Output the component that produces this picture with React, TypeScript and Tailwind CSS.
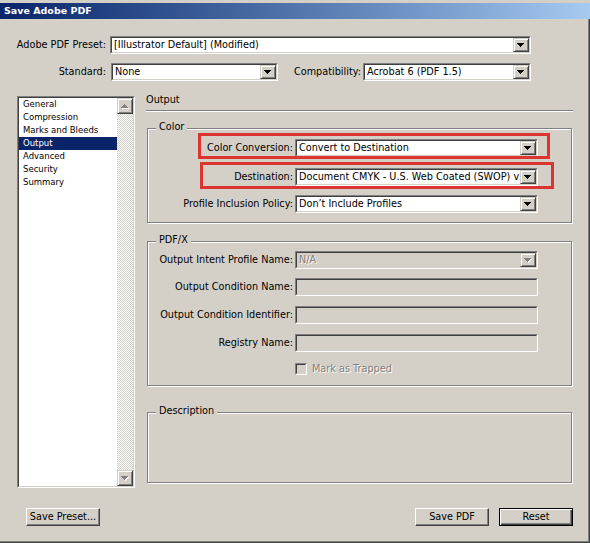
import React from 'react';

// Win2000-style dialog: "Save Adobe PDF" / Output panel

const ArrowDown = ({ disabled = false }: { disabled?: boolean }) => (
  <svg width="8" height="5" viewBox="0 0 8 5" className="block" shapeRendering="crispEdges">
    {disabled && <path d="M1 1h7v1H1zM2 2h5v1H2zM3 3h3v1H3zM4 4h1v1H4z" fill="#ffffff" />}
    <path d="M0 0h7v1H0zM1 1h5v1H1zM2 2h3v1H2zM3 3h1v1H3z" fill={disabled ? '#808080' : '#000000'} />
  </svg>
);

const ArrowUp = ({ disabled = false }: { disabled?: boolean }) => (
  <svg width="8" height="5" viewBox="0 0 8 5" className="block" shapeRendering="crispEdges">
    {disabled && <path d="M4 1h1v1H4zM3 2h3v1H3zM2 3h5v1H2zM1 4h7v1H1z" fill="#ffffff" />}
    <path d="M3 0h1v1H3zM2 1h3v1H2zM1 2h5v1H1zM0 3h7v1H0z" fill={disabled ? '#808080' : '#000000'} />
  </svg>
);

const RaisedButton = ({ children, className = '' }: { children: React.ReactNode; className?: string }) => (
  <div
    className={`flex shrink-0 items-center justify-center bg-[#d4d0c8] border border-t-[#d4d0c8] border-l-[#d4d0c8] border-r-[#404040] border-b-[#404040] shadow-[inset_1px_1px_0_#ffffff,inset_-1px_-1px_0_#808080] ${className}`}
  >
    {children}
  </div>
);

interface FieldProps {
  value?: string;
  className: string;
  disabled?: boolean;
  dropdown?: boolean;
}

const Field: React.FC<FieldProps> = ({ value = '', className, disabled = false, dropdown = true }) => (
  <div className={`flex h-[18px] shrink-0 border border-t-[#808080] border-l-[#808080] border-r-white border-b-white ${className}`}>
    <div
      className={`flex min-w-0 flex-1 border border-t-[#404040] border-l-[#404040] border-r-[#d4d0c8] border-b-[#d4d0c8] ${
        disabled ? 'bg-[#d4d0c8]' : 'bg-white'
      }`}
    >
      <span
        className={`min-w-0 flex-1 overflow-hidden whitespace-nowrap pl-[2px] leading-[14px] ${
          disabled ? 'text-[#808080] [text-shadow:1px_1px_0_#ffffff]' : ''
        }`}
      >
        {value}
      </span>
      {dropdown && (
        <RaisedButton className="w-[16px]">
          <ArrowDown disabled={disabled} />
        </RaisedButton>
      )}
    </div>
  </div>
);

const Group = ({ title, className, children }: { title: string; className: string; children?: React.ReactNode }) => (
  <div className={`relative shrink-0 border border-[#808080] shadow-[inset_1px_1px_0_#ffffff,1px_1px_0_#ffffff] ${className}`}>
    <span className="absolute left-[8px] -top-[8px] bg-[#d4d0c8] px-[3px] leading-[12px]">{title}</span>
    {children}
  </div>
);

const Row = ({ label, children, className = '' }: { label: string; children: React.ReactNode; className?: string }) => (
  <div className={`flex items-center ${className}`}>
    <div className="w-[145px] shrink-0 whitespace-nowrap text-right">{label}</div>
    <div className="ml-[2px]">{children}</div>
  </div>
);

const Button = ({ label, primary = false, className = '' }: { label: string; primary?: boolean; className?: string }) => (
  <div
    className={`flex h-[18px] w-[74px] shrink-0 items-center justify-center whitespace-nowrap bg-[#d4d0c8] leading-[16px] ${
      primary
        ? 'border border-black shadow-[inset_1px_1px_0_#ffffff,inset_-1px_-1px_0_#404040,inset_-2px_-2px_0_#808080]'
        : 'border border-t-white border-l-white border-r-[#404040] border-b-[#404040] shadow-[inset_-1px_-1px_0_#808080]'
    } ${className}`}
  >
    {label}
  </div>
);

const sections = ['General', 'Compression', 'Marks and Bleeds', 'Output', 'Advanced', 'Security', 'Summary'];

export default function App() {
  return (
    <div className="flex h-[543px] w-[590px] flex-col overflow-hidden bg-[#d4d0c8] pt-[3px] font-['DejaVu_Sans',sans-serif] text-[9.7px] text-black">
      {/* title bar */}
      <div className="flex h-[16px] shrink-0 items-center bg-gradient-to-r from-[#0a246a] to-[#a6caf0] pl-[4px] text-[9.5px] font-bold leading-[16px] text-white">
        Save Adobe PDF
      </div>

      <div className="flex flex-1 flex-col border-r border-b border-[#404040] shadow-[inset_-1px_-1px_0_#808080]">
        {/* preset */}
        <div className="mt-[17px] flex items-center">
          <div className="w-[106px] shrink-0 text-right">Adobe PDF Preset:</div>
          <Field value="[Illustrator Default] (Modified)" className="ml-[4px] w-[421px]" />
        </div>

        {/* standard / compatibility */}
        <div className="mt-[9px] flex items-center">
          <div className="w-[106px] shrink-0 text-right">Standard:</div>
          <Field value="None" className="ml-[5px] w-[167px]" />
          <div className="w-[85px] shrink-0 pr-[2px] text-right">Compatibility:</div>
          <Field value="Acrobat 6 (PDF 1.5)" className="w-[168px]" />
        </div>

        {/* main */}
        <div className="mt-[13px] flex">
          {/* section list */}
          <div className="ml-[17px] mt-[2px] flex h-[392px] w-[118px] shrink-0 border border-t-[#808080] border-l-[#808080] border-r-white border-b-white">
            <div className="flex flex-1 border border-t-[#404040] border-l-[#404040] border-r-[#d4d0c8] border-b-[#d4d0c8] bg-white">
              <ul className="min-w-0 flex-1 text-[8.5px]">
                {sections.map((s) => (
                  <li
                    key={s}
                    className={`h-[13px] whitespace-nowrap pl-[4px] leading-[13px] ${s === 'Output' ? 'bg-[#0a246a] text-white' : ''}`}
                  >
                    {s}
                  </li>
                ))}
              </ul>
              <div className="flex w-[16px] shrink-0 flex-col bg-[repeating-conic-gradient(#d4d0c8_0%_25%,#ffffff_0%_50%)] bg-[length:2px_2px]">
                <RaisedButton className="h-[16px]">
                  <ArrowUp disabled />
                </RaisedButton>
                <div className="flex-1" />
                <RaisedButton className="h-[16px]">
                  <ArrowDown disabled />
                </RaisedButton>
              </div>
            </div>
          </div>

          {/* output panel */}
          <div className="ml-[11px] flex w-[427px] shrink-0 flex-col">
            <div className="h-[12px] leading-[12px]">Output</div>
            <div className="mt-[4px] h-[2px] border-t border-t-[#808080] border-b border-b-white" />

            <Group title="Color" className="ml-[1px] mt-[16px] h-[95px] w-[425px] pt-[10px]">
              <Row label="Color Conversion:">
                <Field value="Convert to Destination" className="w-[243px]" />
              </Row>
              <Row label="Destination:" className="mt-[11px]">
                <Field value="Document CMYK - U.S. Web Coated (SWOP) v2" className="w-[243px]" />
              </Row>
              <Row label="Profile Inclusion Policy:" className="mt-[9px]">
                <Field value="Don’t Include Profiles" className="w-[243px]" />
              </Row>
              <div className="absolute left-[50px] top-[4px] h-[26px] w-[352px] border-[3px] border-[#dc342e]" />
              <div className="absolute left-[52px] top-[33px] h-[27px] w-[354px] border-[3px] border-[#dc342e]" />
            </Group>

            <Group title="PDF/X" className="ml-[1px] mt-[18px] h-[145px] w-[425px] pt-[9px]">
              <Row label="Output Intent Profile Name:">
                <Field value="N/A" disabled className="w-[243px]" />
              </Row>
              <Row label="Output Condition Name:" className="mt-[9px]">
                <Field disabled dropdown={false} className="w-[243px]" />
              </Row>
              <Row label="Output Condition Identifier:" className="mt-[10px]">
                <Field disabled dropdown={false} className="w-[243px]" />
              </Row>
              <Row label="Registry Name:" className="mt-[10px]">
                <Field disabled dropdown={false} className="w-[243px]" />
              </Row>
              <div className="mt-[11px] flex h-[12px] items-center pl-[147px]">
                <div className="h-[12px] w-[12px] shrink-0 border border-t-[#808080] border-l-[#808080] border-r-white border-b-white">
                  <div className="h-full w-full border border-t-[#404040] border-l-[#404040] border-r-[#d4d0c8] border-b-[#d4d0c8] bg-[#d4d0c8]" />
                </div>
                <span className="ml-[5px] whitespace-nowrap text-[#808080] [text-shadow:1px_1px_0_#ffffff]">Mark as Trapped</span>
              </div>
            </Group>

            <Group title="Description" className="ml-[1px] mt-[26px] h-[71px] w-[425px]" />
          </div>
        </div>

        {/* buttons */}
        <div className="mt-[20px] flex">
          <Button label="Save Preset..." className="ml-[26px]" />
          <Button label="Save PDF" className="ml-[315px]" />
          <Button label="Reset" primary className="ml-[10px]" />
        </div>
      </div>
    </div>
  );
}
